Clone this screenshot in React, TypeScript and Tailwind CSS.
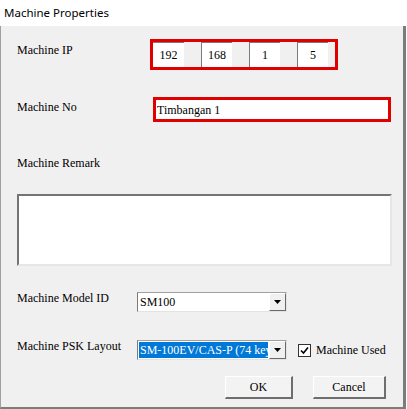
import type { ReactNode } from "react";

const serif = "font-['Liberation_Serif','Times_New_Roman',serif]";

const Label = ({ children, className }: { children: ReactNode; className?: string }) => (
  <div className={`text-[12px] leading-[14px] text-black whitespace-nowrap ${className ?? ""}`}>{children}</div>
);

const IpSegment = ({ value, first }: { value: string; first?: boolean }) => (
  <div className="flex h-full w-[48px] shrink-0">
    <div
      className={`flex h-full w-[31px] items-center justify-center bg-white border-t border-[#7a7a7a] ${
        first ? "" : "border-l"
      } text-[12px] leading-[14px]`}
    >
      {value}
    </div>
  </div>
);

const DropArrow = () => (
  <div className="flex h-full w-[17px] items-center justify-center bg-[#f0f0f0] border-l border-t border-l-[#ffffff] border-t-[#ffffff] border-r border-b border-r-[#696969] border-b-[#696969]">
    <svg width="7" height="4" viewBox="0 0 7 4">
      <path d="M0 0h7L3.5 4z" fill="#000" />
    </svg>
  </div>
);

const Combo = ({ value, selected }: { value: string; selected?: boolean }) => (
  <div className="flex h-[20px] w-[150px] bg-white border-t border-l border-t-[#a0a0a0] border-l-[#7a7a7a] border-r border-b border-r-[#e3e3e3] border-b-[#e3e3e3]">
    <div className="flex flex-1 items-center overflow-hidden pl-[1px] pr-[1px]">
      <div
        className={`flex h-[16px] w-full items-center overflow-hidden whitespace-nowrap pl-[1px] text-[12px] leading-[14px] ${
          selected ? "bg-[#0078d7] text-white" : "text-black"
        }`}
      >
        {value}
      </div>
    </div>
    <DropArrow />
  </div>
);

const Button = ({ children, width }: { children: ReactNode; width: string }) => (
  <div
    className={`flex h-[23px] ${width} items-center justify-center bg-[#f3f3f3] border-t border-l border-t-[#ffffff] border-l-[#ffffff] border-r-2 border-b-2 border-r-[#6e6e6e] border-b-[#6e6e6e] text-[12px] leading-[14px] text-black`}
  >
    {children}
  </div>
);

export default function App() {
  return (
    <div className={`flex h-[409px] w-[407px] flex-col overflow-hidden bg-white ${serif}`}>
      <div className="flex h-[26px] shrink-0 items-center pl-[4px] font-['Noto_Sans','Segoe_UI',sans-serif] text-[11.5px] text-black">
        Machine Properties
      </div>

      <div className="flex flex-1 flex-col bg-[#f0f0f0] border-l border-l-[#a0a0a0] border-r-[3px] border-r-[#7c7c7c] border-b-2 border-b-[#7c7c7c] mr-[1px]">
        {/* IP */}
        <div className="mt-[13px] flex h-[31px] items-start">
          <Label className="ml-[16px] mt-[4px] w-[133px]">Machine IP</Label>
          <div className="flex h-[31px] w-[188px] border-[3px] border-[#e00000]">
            <IpSegment value="192" first />
            <IpSegment value="168" />
            <IpSegment value="1" />
            <div className="flex h-full w-[36px]">
              <div className="flex h-full w-[31px] items-center justify-center bg-white border-t border-l border-[#7a7a7a] text-[12px] leading-[14px]">
                5
              </div>
            </div>
          </div>
        </div>

        {/* No */}
        <div className="mt-[27px] flex h-[25px] items-start">
          <Label className="ml-[16px] mt-[3px] w-[136px]">Machine No</Label>
          <div className="flex h-[25px] w-[238px] items-center border-[3px] border-[#e00000] bg-white pl-[1px] text-[12px] leading-[14px]">
            Timbangan 1
          </div>
        </div>

        {/* Remark */}
        <Label className="ml-[16px] mt-[34px]">Machine Remark</Label>
        <div className="ml-[16px] mt-[24px] h-[72px] w-[375px] bg-white border-t-2 border-l-2 border-t-[#747474] border-l-[#747474] border-r-2 border-b-2 border-r-[#e6e6e6] border-b-[#e6e6e6]" />

        {/* Model */}
        <div className="mt-[25px] flex h-[21px] items-start">
          <Label className="ml-[16px] w-[120px]">Machine Model ID</Label>
          <div className="mt-[1px]">
            <Combo value="SM100" />
          </div>
        </div>

        {/* PSK */}
        <div className="mt-[27px] flex h-[21px] items-start">
          <Label className="ml-[16px] w-[120px]">Machine PSK Layout</Label>
          <div className="mt-[1px]">
            <Combo value="SM-100EV/CAS-P (74 keys)" selected />
          </div>
          <div className="ml-[11px] mt-[4px] flex items-center gap-[5px]">
            <div className="flex h-[13px] w-[13px] items-center justify-center border border-[#333333] bg-white">
              <svg width="9" height="9" viewBox="0 0 9 9">
                <path d="M1 4.5L3.5 7L8 1.5" fill="none" stroke="#000" strokeWidth="1.6" />
              </svg>
            </div>
            <Label>Machine Used</Label>
          </div>
        </div>

        {/* Buttons */}
        <div className="mt-[16px] flex justify-end gap-[20px] pr-[17px]">
          <Button width="w-[68px]">OK</Button>
          <Button width="w-[73px]">Cancel</Button>
        </div>
      </div>
    </div>
  );
}
